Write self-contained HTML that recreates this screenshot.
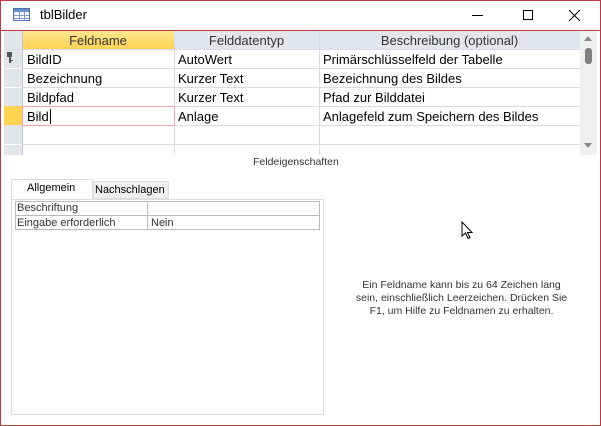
<!DOCTYPE html>
<html><head><style>
*{margin:0;padding:0;box-sizing:border-box}
body{width:601px;height:426px;background:#fff;font-family:"Liberation Sans",sans-serif;position:relative;overflow:hidden}
.a{position:absolute}
.win{left:0;top:0;width:601px;height:426px;border:1px solid #b83b44}
.t{font-size:13px;color:#000;white-space:nowrap}
.s{font-size:10.5px;color:#333;white-space:nowrap}
.hl{background:#d6dbe5;height:1px}
.vl{background:#d6dbe5;width:1px}
</style></head><body>
<div class="a win"></div>
<svg class="a" style="left:13px;top:8px" width="18" height="14" viewBox="0 0 18 14">
<rect x="0.5" y="0.5" width="16" height="12" fill="#fff" stroke="#4a6fb5"/>
<rect x="1" y="1" width="15" height="3" fill="#6d8fc9"/>
<path d="M1 7.5H16M1 10.5H16M6.5 4V13M11.5 4V13" stroke="#7e9bd0"/>
</svg>
<div class="a t" style="left:40px;top:7px;font-size:13px">tblBilder</div>
<div class="a" style="left:472px;top:15px;width:11px;height:1px;background:#000"></div>
<div class="a" style="left:523px;top:10px;width:10px;height:10px;border:1px solid #000"></div>
<svg class="a" style="left:569px;top:10px" width="11" height="11"><path d="M0 0L11 11M11 0L0 11" stroke="#000"/></svg>
<div class="a" style="left:1px;top:30px;width:599px;height:1px;background:#b83b44"></div>
<div class="a" style="left:4px;top:31px;width:576px;height:124px;background:#fff"></div>
<div class="a" style="left:4px;top:31px;width:18px;height:124px;background:#e3e5ea"></div>
<div class="a" style="left:22px;top:31px;width:152px;height:18px;background:linear-gradient(#ffe68f,#ffd453)"></div>
<div class="a" style="left:174px;top:31px;width:406px;height:18px;background:#e3e6ec"></div>
<div class="a" style="left:4px;top:106px;width:18px;height:19px;background:#ffd453"></div>
<div class="a t" style="left:22px;top:33px;width:152px;text-align:center;color:#333">Feldname</div>
<div class="a t" style="left:174px;top:33px;width:145px;text-align:center;color:#333">Felddatentyp</div>
<div class="a t" style="left:319px;top:33px;width:261px;text-align:center;color:#333">Beschreibung (optional)</div>
<div class="a hl" style="left:4px;top:49px;width:576px"></div>
<div class="a hl" style="left:22px;top:68px;width:558px"></div>
<div class="a hl" style="left:4px;top:68px;width:18px;background:#fff"></div>
<div class="a hl" style="left:22px;top:87px;width:558px"></div>
<div class="a hl" style="left:4px;top:87px;width:18px;background:#fff"></div>
<div class="a hl" style="left:22px;top:106px;width:558px"></div>
<div class="a hl" style="left:22px;top:125px;width:558px"></div>
<div class="a hl" style="left:22px;top:144px;width:558px"></div>
<div class="a hl" style="left:4px;top:144px;width:18px;background:#fff"></div>
<div class="a vl" style="left:22px;top:31px;height:124px;background:#bfc5d0"></div>
<div class="a vl" style="left:174px;top:31px;height:124px"></div>
<div class="a vl" style="left:319px;top:31px;height:124px"></div>
<div class="a" style="left:22px;top:106px;width:153px;height:20px;border:1px solid #f0a3a8"></div>
<div class="a" style="left:50px;top:109px;width:1px;height:15px;background:#000"></div>
<svg class="a" style="left:6px;top:52px" width="8" height="12"><rect x="1" y="0" width="5" height="5" fill="#555"/><rect x="3" y="5" width="2" height="6" fill="#555"/><rect x="5" y="8" width="2" height="1" fill="#555"/></svg>
<div class="a t" style="left:27px;top:52px">BildID</div>
<div class="a t" style="left:178px;top:52px">AutoWert</div>
<div class="a t" style="left:323px;top:52px">Primärschlüsselfeld der Tabelle</div>
<div class="a t" style="left:27px;top:71px">Bezeichnung</div>
<div class="a t" style="left:178px;top:71px">Kurzer Text</div>
<div class="a t" style="left:323px;top:71px">Bezeichnung des Bildes</div>
<div class="a t" style="left:27px;top:90px">Bildpfad</div>
<div class="a t" style="left:178px;top:90px">Kurzer Text</div>
<div class="a t" style="left:323px;top:90px">Pfad zur Bilddatei</div>
<div class="a t" style="left:27px;top:109px">Bild</div>
<div class="a t" style="left:178px;top:109px">Anlage</div>
<div class="a t" style="left:323px;top:109px">Anlagefeld zum Speichern des Bildes</div>
<div class="a" style="left:580px;top:31px;width:17px;height:124px;background:#f0f0f0"></div>
<svg class="a" style="left:583px;top:35px" width="10" height="7"><path d="M1 6L5 1L9 6Z" fill="#888"/></svg>
<div class="a" style="left:585px;top:48px;width:7px;height:16px;border-radius:3px;background:#808080"></div>
<svg class="a" style="left:583px;top:142px" width="10" height="7"><path d="M1 1L5 6L9 1Z" fill="#888"/></svg>
<div class="a s" style="left:253px;top:156px">Feldeigenschaften</div>
<div class="a" style="left:11px;top:179px;width:82px;height:21px;background:#fff;border:1px solid #ddd;border-bottom:none"></div>
<div class="a s" style="left:27px;top:182px;color:#000;font-size:11px">Allgemein</div>
<div class="a" style="left:93px;top:181px;width:76px;height:18px;background:#f0f0f0;border:1px solid #ddd"></div>
<div class="a s" style="left:95px;top:184px;color:#000;font-size:11px">Nachschlagen</div>
<div class="a" style="left:11px;top:199px;width:313px;height:216px;border:1px solid #ddd;background:#fff"></div>
<div class="a" style="left:15px;top:201px;width:305px;height:29px;border:1px solid #bbb"></div>
<div class="a" style="left:15px;top:215px;width:305px;height:1px;background:#bbb"></div>
<div class="a" style="left:147px;top:201px;width:1px;height:29px;background:#bbb"></div>
<div class="a s" style="left:17px;top:202px;font-size:11px">Beschriftung</div>
<div class="a s" style="left:17px;top:217px;font-size:11px">Eingabe erforderlich</div>
<div class="a s" style="left:151px;top:217px;font-size:11px">Nein</div>
<div class="a s" style="left:330px;top:279px;width:263px;text-align:center;line-height:13px">Ein Feldname kann bis zu 64 Zeichen lang<br>sein, einschließlich Leerzeichen. Drücken Sie<br>F1, um Hilfe zu Feldnamen zu erhalten.</div>
<svg class="a" style="left:461px;top:221px" width="13" height="19"><path d="M1 1L1 15L4.5 12L7 17.5L9 16.5L6.5 11.5L11 11.5Z" fill="#fff" stroke="#000"/></svg>
</body></html>
